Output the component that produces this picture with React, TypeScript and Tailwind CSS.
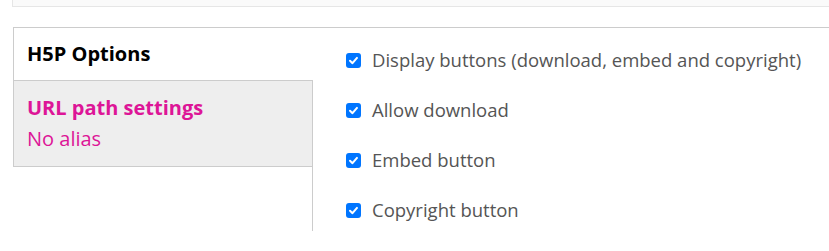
import React from 'react';

const options = [
  'Display buttons (download, embed and copyright)',
  'Allow download',
  'Embed button',
  'Copyright button',
];

function Check() {
  return (
    <span className="flex items-center justify-center w-[15px] h-[15px] rounded-[3px] bg-[#0075ff] shrink-0">
      <svg width="11" height="11" viewBox="0 0 12 12" fill="none">
        <path d="M2.2 6.3 L4.9 8.9 L9.8 3.2" stroke="white" strokeWidth="2.2" strokeLinecap="round" strokeLinejoin="round" />
      </svg>
    </span>
  );
}

export default function App() {
  return (
    <div className="w-[829px] h-[251px] bg-white overflow-hidden" style={{ fontFamily: '"Open Sans", sans-serif' }}>
      {/* previous fieldset, scrolled off */}
      <div className="ml-[12px] h-[7px] border-l border-b border-[#e6e6e6] bg-[#fafafa]" />

      <div className="mt-[20px] ml-[13px] border-t border-[#cccccc] flex">
        {/* tab menu */}
        <div className="w-[300px] shrink-0 flex flex-col">
          <div className="h-[52px] border-l border-[#cccccc] bg-white flex items-center pl-[13px]">
            <span className="text-[20px] font-bold text-black leading-none">H5P Options</span>
          </div>
          <div className="h-[87px] border border-[#cccccc] bg-[#eeeeee] pl-[13px] pt-[13px]">
            <div className="text-[20px] font-bold text-[#dd1597] leading-[28px]">URL path settings</div>
            <div className="text-[20px] text-[#dd1597] leading-[28px] mt-[3px]">No alias</div>
          </div>
          <div className="h-[64px] border-r border-[#cccccc]" />
        </div>

        {/* pane */}
        <div className="flex-1 pl-[33px] pt-[7px]">
          {options.map(o => (
            <div key={o} className="flex items-center h-[50px] gap-[11px]">
              <Check />
              <span className="text-[18.5px] text-[#555555] leading-none whitespace-nowrap">{o}</span>
            </div>
          ))}
        </div>
      </div>
    </div>
  );
}
